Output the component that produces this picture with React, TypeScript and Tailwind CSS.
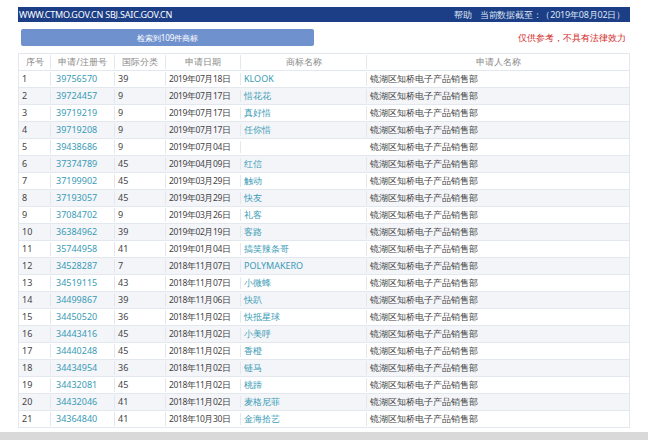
const rows: [string, string, string, string][] = [
  ["39756570", "39", "2019年07月18日", "KLOOK"],
  ["39724457", "9", "2019年07月17日", "惜花花"],
  ["39719219", "9", "2019年07月17日", "真好惜"],
  ["39719208", "9", "2019年07月17日", "任你惜"],
  ["39438686", "9", "2019年07月04日", ""],
  ["37374789", "45", "2019年04月09日", "红信"],
  ["37199902", "45", "2019年03月29日", "触动"],
  ["37193057", "45", "2019年03月29日", "快友"],
  ["37084702", "9", "2019年03月26日", "礼客"],
  ["36384962", "39", "2019年02月19日", "客路"],
  ["35744958", "41", "2019年01月04日", "搞笑辣条哥"],
  ["34528287", "7", "2018年11月07日", "POLYMAKERO"],
  ["34519115", "43", "2018年11月07日", "小微蜂"],
  ["34499867", "39", "2018年11月06日", "快趴"],
  ["34450520", "36", "2018年11月02日", "快抵星球"],
  ["34443416", "45", "2018年11月02日", "小美呼"],
  ["34440248", "45", "2018年11月02日", "香橙"],
  ["34434954", "36", "2018年11月02日", "链马"],
  ["34432081", "45", "2018年11月02日", "桃蹄"],
  ["34432046", "41", "2018年11月02日", "麦格尼菲"],
  ["34364840", "41", "2018年10月30日", "金海拾艺"],
];

const cols = "grid grid-cols-[32px_64px_51px_75px_126px_1fr]";
const cell = "border-r border-[#e3e7ee] px-[3px] whitespace-nowrap overflow-hidden";

export default function App() {
  return (
    <div className="w-[648px] h-[440px] bg-white overflow-hidden flex flex-col font-['Liberation_Sans','Noto_Sans_CJK_SC',sans-serif] text-[9px] text-[#444]">
      <div className="h-[7px]" />
      <div className="mx-[18px] h-[15px] bg-[#1c3e86] text-white flex items-center justify-between px-[1px] text-[9px] tracking-[-0.2px]">
        <span>WWW.CTMO.GOV.CN SBJ.SAIC.GOV.CN</span>
        <span className="flex gap-[8px] pr-[4px] text-[#dfe6f5]">
          <span>帮助</span>
          <span>当前数据截至：（2019年08月02日）</span>
        </span>
      </div>
      <div className="mx-[18px] h-[32px] flex items-center justify-between border-b border-[#e3e7ee]">
        <div className="ml-[3px] w-[293px] h-[17px] rounded-[2px] bg-[#6f92cf] text-white flex items-center justify-center text-[8px]">
          检索到109件商标
        </div>
        <span className="text-[#d2261d] pr-[4px]">仅供参考，不具有法律效力</span>
      </div>
      <div className="mx-[18px] border-l border-r border-[#e3e7ee]">
        <div className={`${cols} h-[17px] items-center text-[#888] text-center border-b border-[#e3e7ee]`}>
          <div className={cell}>序号</div>
          <div className={cell}>申请/注册号</div>
          <div className={cell}>国际分类</div>
          <div className={cell}>申请日期</div>
          <div className={cell}>商标名称</div>
          <div className="px-[3px]">申请人名称</div>
        </div>
        {rows.map((r, i) => (
          <div
            key={r[0]}
            className={`${cols} h-[17px] items-center border-b border-[#e3e7ee] ${i % 2 === 1 ? "bg-[#f3f5f9]" : "bg-white"}`}
          >
            <div className={cell}>{i + 1}</div>
            <div className={`${cell} text-[#3a9bb5] pl-[5px]`}>{r[0]}</div>
            <div className={cell}>{r[1]}</div>
            <div className={`${cell} text-[8.5px] tracking-[-0.4px]`}>{r[2]}</div>
            <div className={`${cell} text-[#3a9bb5]`}>{r[3]}</div>
            <div className="px-[3px]">镜湖区知桥电子产品销售部</div>
          </div>
        ))}
      </div>
      <div className="flex-1" />
      <div className="h-[8px] bg-[#d9d9d9]" />
    </div>
  );
}
